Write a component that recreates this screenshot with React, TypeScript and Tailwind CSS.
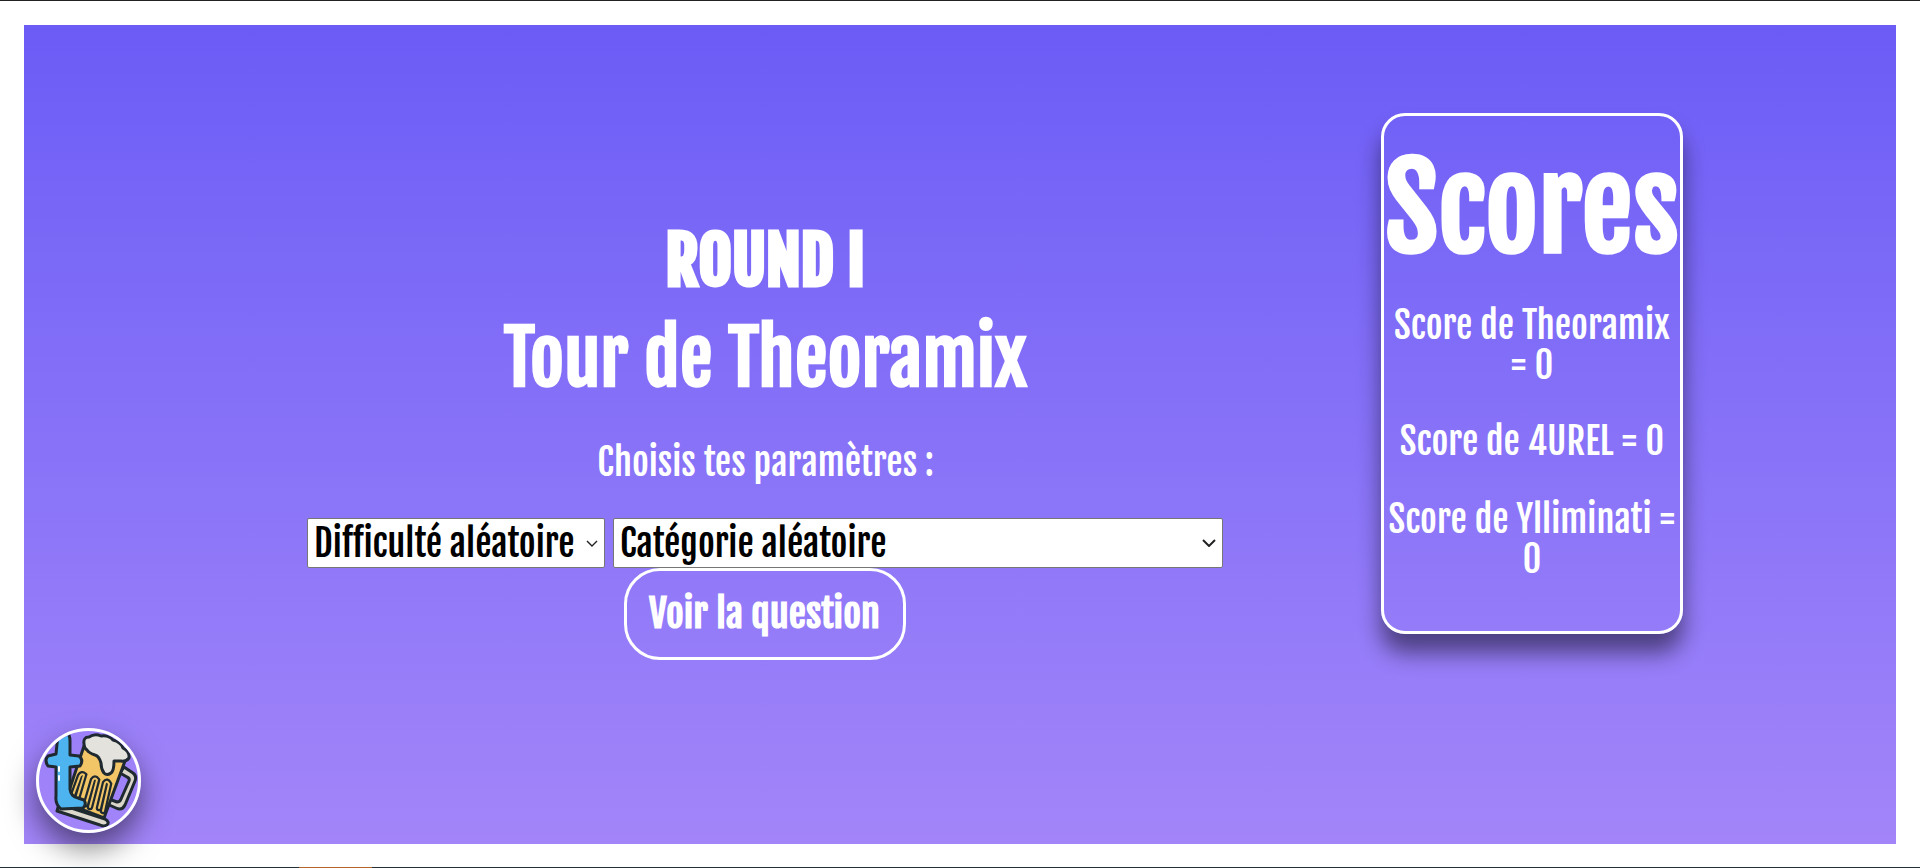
import React from "react";

function Logo() {
  return (
    <svg viewBox="0 0 99 99" className="w-full h-full blur-[0.4px]">
      <defs>
        <clipPath id="c"><circle cx="49.5" cy="49.5" r="49.5" /></clipPath>
      </defs>
      <g clipPath="url(#c)">
        <g stroke="#1f2a30" strokeWidth="3" strokeLinejoin="round">
          <path d="M85 36 L94 42 Q98 45 96 50 L86 74 Q83 80 77 77 L68 73 L70 68 L78 71 Q81 71 82 68 L90 50 Q91 47 88 46 L81 42 Z" fill="#d9d5c8" />
          <path d="M45 15 L86 30 L65 87 L26 72 Z" fill="#f2c667" />
          <path d="M20 73 L66 88 Q71 91 68 94 Q65 96 61 94 L18 80 Z" fill="#dcd8cc" />
          <path d="M45 13 Q44 6 50 6 Q56 2 62 5 Q70 4 74 9 Q82 11 84 17 Q91 21 90 27 Q87 31 82 30 L75 30 Q75 40 72 42 Q68 45 65 42 Q62 38 62 32 Q60 25 56 24 Q50 22 48 19 Q45 17 45 13 Z" fill="#e3e2dc" />
        </g>
        <g fill="none" strokeLinecap="round">
          <path d="M33 67 L41 45 Q43 42 45 44 L37 71" stroke="#1f2a30" strokeWidth="6.5" />
          <path d="M47 73 L54 49 Q56 46 58 49 L51 76" stroke="#1f2a30" strokeWidth="6.5" />
          <path d="M60 77 L66 52 Q68 49 70 53 L64 80" stroke="#1f2a30" strokeWidth="6.5" />
          <path d="M33 67 L41 45 Q43 42 45 44 L37 71" stroke="#f2c667" strokeWidth="2" />
          <path d="M47 73 L54 49 Q56 46 58 49 L51 76" stroke="#f2c667" strokeWidth="2" />
          <path d="M60 77 L66 52 Q68 49 70 53 L64 80" stroke="#f2c667" strokeWidth="2" />
        </g>
        <path d="M19 3 L26 0 Q31 2 31 10 L31 24 L40 25 Q45 29 41 35 L31 36 L31 58 Q32 66 39 67 L45 69 Q48 74 44 77 L22 78 Q16 73 17 65 L17 36 L9 35 Q5 29 9 25 L17 23 Z" fill="#4db4f0" stroke="#1f2a30" strokeWidth="3" strokeLinejoin="round" />
        <path d="M20 36 L20 40 M20 45 L20 49" stroke="#fff" strokeWidth="2" strokeLinecap="round" />
      </g>
    </svg>
  );
}

export default function App() {
  return (
    <div className="relative w-full h-[868px] bg-white border-t border-t-[#222222] flex flex-col font-['Fjalla_One','Oswald','Liberation_Sans',sans-serif]">
      <div className="mx-6 mt-6 h-[819px] flex bg-gradient-to-b from-[#6c5cf6] to-[#a385f9]">
        <div className="w-[1357px] pl-[126px] pt-[196px] flex flex-col items-center text-white">
          <h1 className="font-bold text-[63px] leading-[80px] tracking-[0.5px] [-webkit-text-stroke:3px_white]">ROUND I</h1>
          <h2 className="font-bold text-[73.6px] leading-[108px] mt-[3px]">Tour de Theoramix</h2>
          <p className="text-[36.48px] leading-[48px] mt-[26px]">Choisis tes paramètres :</p>
          <div className="flex gap-2 mt-[32px] mr-px text-black font-normal">
            <div className="relative">
              <select defaultValue="a" className="appearance-none block w-[298px] h-[50px] bg-white border border-[#767676] rounded-[2px] text-[36.48px] leading-[48px] pl-[6px]">
                <option value="a">Difficulté aléatoire</option>
              </select>
              <svg viewBox="0 0 12 7" className="absolute right-[7px] top-[22px] w-3 h-[7px] pointer-events-none">
                <path d="M1 1 L6 6 L11 1" fill="none" stroke="#222222" strokeWidth="1.4" />
              </svg>
            </div>
            <div className="relative">
              <select defaultValue="a" className="appearance-none block w-[610px] h-[50px] bg-white border border-[#767676] rounded-[2px] text-[36.48px] leading-[48px] pl-[6px]">
                <option value="a">Catégorie aléatoire</option>
              </select>
              <svg viewBox="0 0 14 8" className="absolute right-[7px] top-[21px] w-[14px] h-2 pointer-events-none">
                <path d="M1 1 L7 7 L13 1" fill="none" stroke="#222222" strokeWidth="2" />
              </svg>
            </div>
          </div>
          <button className="w-[282px] h-[92px] mr-[2px] border-[3px] border-white rounded-[36px] font-bold text-[38.4px] text-white">
            Voir la question
          </button>
        </div>
        <div className="mt-[88px] w-[302px] h-[521px] border-[3px] border-white rounded-[24px] shadow-[0_19px_22px_rgba(0,0,0,0.48)] flex flex-col items-center text-white text-center">
          <div className="font-bold text-[115.2px] leading-[140px] mt-[23px]">Scores</div>
          <p className="text-[36.48px] leading-[40px] mt-[26px]">Score de Theoramix = 0</p>
          <p className="text-[36.48px] leading-[40px] mt-[36px]">Score de 4UREL = 0</p>
          <p className="text-[36.48px] leading-[40px] mt-[38px]">Score de Ylliminati = 0</p>
        </div>
      </div>
      <div className="absolute left-[36px] top-[727px] w-[105px] h-[105px] rounded-full border-[3px] border-white overflow-hidden shadow-[0_15px_30px_rgba(0,0,0,0.5)]">
        <Logo />
      </div>
      <div className="absolute left-0 right-0 bottom-0 h-px bg-[#243038]">
        <div className="absolute left-[299px] w-[73px] h-px bg-[#b5642a]" />
      </div>
    </div>
  );
}
